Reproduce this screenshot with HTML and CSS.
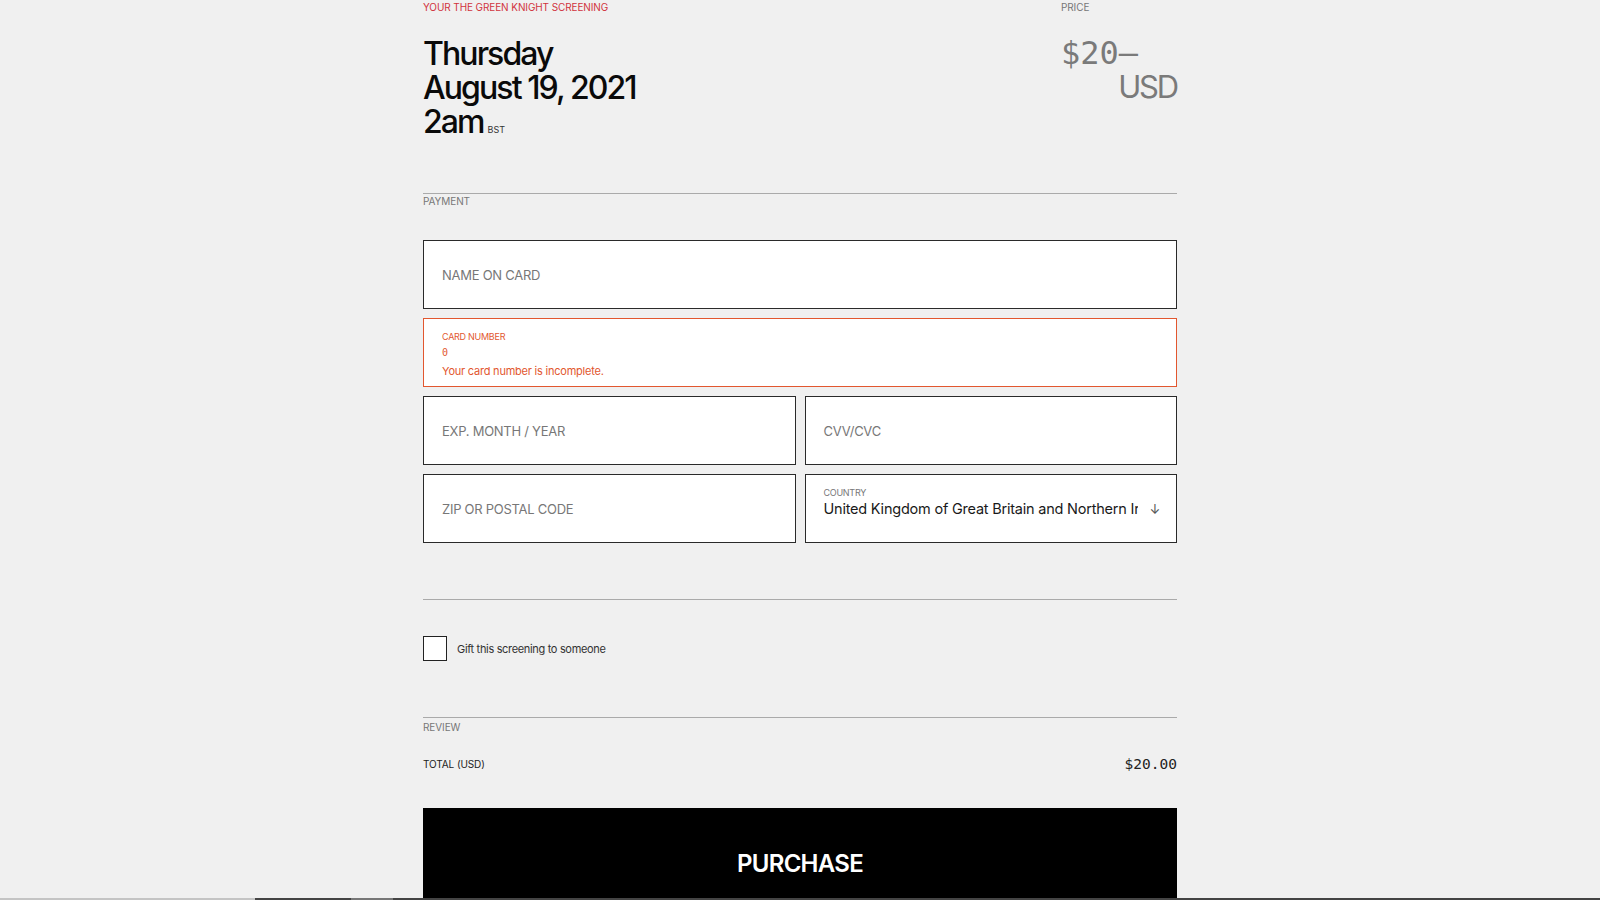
FILE: index.html
```html
<!DOCTYPE html>
<html lang="en">
<head>
<meta charset="utf-8">
<title>Checkout</title>
<link rel="stylesheet" href="styles.css">
</head>
<body>
<main class="checkout">
  <header class="summary">
    <div class="event">
      <div class="eyebrow eyebrow-red">YOUR THE GREEN KNIGHT SCREENING</div>
      <h1 class="when"><span class="when-line">Thursday</span><span class="when-line">August 19, 2021</span><span class="when-line">2am<span class="tz">BST</span></span></h1>
    </div>
    <div class="price">
      <div class="eyebrow">PRICE</div>
      <div class="amount"><span class="amount-num">$20–</span><span class="amount-cur">USD</span></div>
    </div>
  </header>

  <section class="section payment">
    <div class="section-label">PAYMENT</div>
    <div class="fields">
      <div class="field field-full"><span class="placeholder">NAME ON CARD</span></div>
      <div class="field field-full field-error">
        <span class="mini-label">CARD NUMBER</span>
        <span class="card-value">0</span>
        <span class="error-text">Your card number is incomplete.</span>
      </div>
      <div class="field"><span class="placeholder">EXP. MONTH / YEAR</span></div>
      <div class="field"><span class="placeholder">CVV/CVC</span></div>
      <div class="field"><span class="placeholder">ZIP OR POSTAL CODE</span></div>
      <div class="field field-select">
        <span class="mini-label mini-gray">COUNTRY</span>
        <div class="select-row">
          <span class="select-value">United Kingdom of Great Britain and Northern Ireland</span>
          <span class="select-arrow">↓</span>
        </div>
      </div>
    </div>
  </section>

  <section class="section gift">
    <label class="gift-row"><span class="checkbox"></span><span class="gift-text">Gift this screening to someone</span></label>
  </section>

  <section class="section review">
    <div class="section-label">REVIEW</div>
    <div class="total-row">
      <span class="total-label">TOTAL (USD)</span>
      <span class="total-value">$20.00</span>
    </div>
    <button class="purchase"><span class="purchase-text">PURCHASE</span></button>
  </section>
</main>
<div class="bottom-bar"><span class="bar-a"></span><span class="bar-b"></span><span class="bar-c"></span><span class="bar-d"></span></div>
</body>
</html>
```

FILE: styles.css
```css
html, body {
  margin: 0;
  padding: 0;
  background: #f0f0f0;
  overflow: hidden;
}
body {
  font-family: Inter, "Liberation Sans", sans-serif;
  color: #111;
  height: 900px;
}
.checkout {
  width: 754px;
  margin: 0 auto;
}
.summary {
  display: flex;
  justify-content: space-between;
  height: 193px;
}
.eyebrow {
  font-size: 10px;
  line-height: 15px;
  letter-spacing: -0.01em;
  color: #777;
}
.eyebrow-red {
  color: #d0333d;
}
.when {
  margin: 22px 0 0;
  font-size: 32px;
  font-weight: 500;
  letter-spacing: -0.06em;
  color: #0a0a0a;
}
.when-line {
  display: block;
  height: 34px;
  line-height: 34px;
}
.tz {
  margin-left: 4px;
  font-size: 9px;
  letter-spacing: 0;
  font-weight: 400;
  color: #333;
}
.price {
  width: 116px;
}
.amount {
  margin-top: 21px;
  display: flex;
  flex-direction: column;
  font-family: "DejaVu Sans Mono", "Liberation Mono", monospace;
  font-size: 32px;
  line-height: 34px;
  color: #7a7a7a;
}
.amount-cur {
  align-self: flex-end;
  font-family: Inter, "Liberation Sans", sans-serif;
  font-size: 31px;
  letter-spacing: -0.07em;
}
.section {
  border-top: 1px solid #aaa;
}
.section-label {
  font-size: 10px;
  line-height: 14px;
  color: #777;
  letter-spacing: -0.01em;
}
.payment .fields {
  margin-top: 32px;
  display: grid;
  grid-template-columns: minmax(0, 1fr) minmax(0, 1fr);
  gap: 9px;
}
.field {
  box-sizing: border-box;
  min-width: 0;
  height: 69px;
  background: #fff;
  border: 1px solid #2a2a2a;
  padding: 0 18px;
  display: flex;
  flex-direction: column;
  justify-content: center;
}
.field-full {
  grid-column: 1 / -1;
}
.placeholder {
  font-size: 13px;
  color: #777;
  letter-spacing: -0.02em;
}
.field-error {
  border-color: #e2572f;
  justify-content: flex-start;
  padding-top: 12px;
}
.mini-label {
  font-size: 9px;
  line-height: 12px;
  color: #e2572f;
  letter-spacing: -0.03em;
}
.mini-gray {
  color: #777;
}
.card-value {
  font-family: "DejaVu Sans Mono", monospace;
  font-size: 10px;
  line-height: 19px;
  color: #e2572f;
}
.error-text {
  font-size: 11px;
  line-height: 18px;
  color: #e2572f;
  letter-spacing: -0.02em;
}
.field-select {
  justify-content: flex-start;
  padding-top: 12px;
}
.select-row {
  display: flex;
  align-items: center;
  margin-top: -1px;
}
.select-value {
  flex: 0 0 314px;
  width: 314px;
  overflow: hidden;
  white-space: nowrap;
  font-size: 14.5px;
  line-height: 22px;
  color: #1a1a1a;
  letter-spacing: -0.015em;
}
.select-arrow {
  margin-left: 12px;
  font-size: 13px;
  line-height: 22px;
  color: #555;
}
.payment {
  padding-bottom: 56px;
}
.gift {
  padding: 36px 0 56px;
}
.gift-row {
  display: flex;
  align-items: center;
  gap: 10px;
}
.checkbox {
  box-sizing: border-box;
  width: 24px;
  height: 25px;
  border: 1px solid #222;
  background: #fff;
}
.gift-text {
  font-size: 11px;
  color: #333;
  letter-spacing: -0.03em;
}
.review .section-label {
  margin-top: 2px;
}
.total-row {
  margin-top: 20px;
  display: flex;
  justify-content: space-between;
  align-items: center;
  height: 20px;
}
.total-label {
  font-size: 10px;
  color: #222;
  letter-spacing: -0.01em;
}
.total-value {
  font-family: "DejaVu Sans Mono", monospace;
  font-size: 14.5px;
  color: #222;
}
.purchase {
  display: flex;
  justify-content: center;
  align-items: center;
  width: 100%;
  height: 110px;
  margin-top: 34px;
  border: 0;
  background: #000;
  color: #fff;
  padding: 0;
  font-family: Inter, "Liberation Sans", sans-serif;
}
.purchase-text {
  font-size: 24px;
  font-weight: 600;
  letter-spacing: -0.03em;
}
.bottom-bar {
  position: fixed;
  left: 0;
  right: 0;
  bottom: 0;
  height: 2px;
  display: flex;
}
.bar-a { width: 255px; background: #c4c4c4; }
.bar-b { width: 96px; background: #444; }
.bar-c { width: 42px; background: #777; }
.bar-d { flex: 1; background: #444; }
```
